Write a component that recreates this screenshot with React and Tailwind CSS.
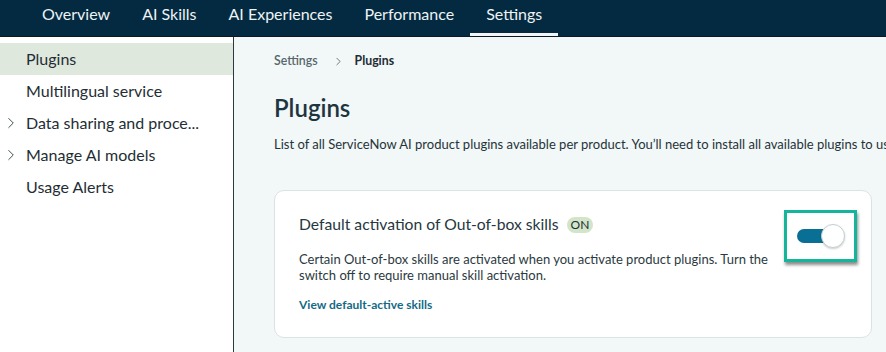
import { ChevronRight } from 'lucide-react';

const tabs = ['Overview', 'AI Skills', 'AI Experiences', 'Performance', 'Settings'];

const sideItems = [
  { label: 'Plugins', active: true },
  { label: 'Multilingual service' },
  { label: 'Data sharing and proce...', expandable: true },
  { label: 'Manage AI models', expandable: true },
  { label: 'Usage Alerts' },
];

function Toggle() {
  return (
    <div className="relative w-[48px] h-[24px]">
      <div className="absolute left-0 top-[5px] w-[40px] h-[14px] rounded-full bg-[#0a6f94]" />
      <div className="absolute right-0 top-0 w-[24px] h-[24px] rounded-full bg-white border border-[#c3cfd3] shadow-[0_1px_2px_rgba(0,0,0,0.2)]" />
    </div>
  );
}

export default function App() {
  return (
    <div className="w-[886px] h-[352px] overflow-hidden flex flex-col bg-white text-[#1f2e35]" style={{ fontFamily: 'Lato, "Open Sans", sans-serif' }}>
      {/* Top tabs */}
      <nav className="h-[37px] shrink-0 bg-[#032a40] flex items-stretch pl-[26px] border-b border-[#0b1a22]">
        {tabs.map((t) => (
          <div
            key={t}
            className={`px-4 flex items-center text-[16px] text-[#eef3f5] border-b-[3px] ${t === 'Settings' ? 'border-[#f2f5f6]' : 'border-transparent'}`}
          >
            <span className="-mt-[6px]">{t}</span>
          </div>
        ))}
      </nav>

      <div className="flex flex-1 min-h-0">
        {/* Sidebar */}
        <aside className="w-[234px] shrink-0 bg-white border-r border-[#2c3a40] pt-[6px]">
          {sideItems.map((item) => (
            <div
              key={item.label}
              className={`h-[32px] flex items-center relative text-[16px] ${item.active ? 'bg-[#dfe8dd]' : ''}`}
            >
              {item.expandable && (
                <ChevronRight size={18} strokeWidth={1.3} className="absolute left-[2px] text-[#3c4a50]" />
              )}
              <span className="pl-[26px] whitespace-nowrap">{item.label}</span>
            </div>
          ))}
        </aside>

        {/* Main */}
        <main className="flex-1 min-w-0 overflow-hidden bg-[#f2f7f7] pl-[40px] pt-[15px]">
          <div className="flex items-center h-[18px] text-[12.3px]">
            <span className="font-semibold text-[#56666c]">Settings</span>
            <ChevronRight size={13} strokeWidth={1.6} className="ml-[14px] mr-[10px] text-[#56666c]" />
            <span className="font-bold text-[#1e2c33]">Plugins</span>
          </div>

          <h1 className="mt-[22px] text-[24px] leading-[32px] font-semibold text-[#1d3540]">Plugins</h1>

          <p className="mt-[10px] text-[13px] leading-[20px] whitespace-nowrap text-[#25343a]">
            List of all ServiceNow AI product plugins available per product. You’ll need to install all available plugins to use ServiceNow AI features.
          </p>

          <div className="mt-[36px] w-[598px] h-[148px] bg-white border border-[#dbe3e5] rounded-[10px] flex justify-between pl-[24px] pr-[14px] pt-[19px]">
            <div className="pt-[4px]">
              <div className="flex items-center h-[22px]">
                <span className="text-[15.7px] text-[#263740]">Default activation of Out-of-box skills</span>
                <span className="ml-[8px] h-[16px] px-[4px] flex items-center rounded-full bg-[#d3e5c8] text-[12px] text-[#1d2f36]">ON</span>
              </div>
              <p className="mt-[15px] w-[480px] text-[13px] leading-[16px] text-[#2b3a40]">
                Certain Out-of-box skills are activated when you activate product plugins. Turn the switch off to require manual skill activation.
              </p>
              <div className="mt-[13px] h-[18px] flex items-center text-[12px] font-bold text-[#136a86]">
                View default-active skills
              </div>
            </div>
            <div className="w-[73px] h-[52px] shrink-0 border-[3px] border-[#14b59b] bg-white shadow-[1px_3px_3px_rgba(0,0,0,0.45)] flex items-center justify-center">
              <Toggle />
            </div>
          </div>
        </main>
      </div>
    </div>
  );
}
